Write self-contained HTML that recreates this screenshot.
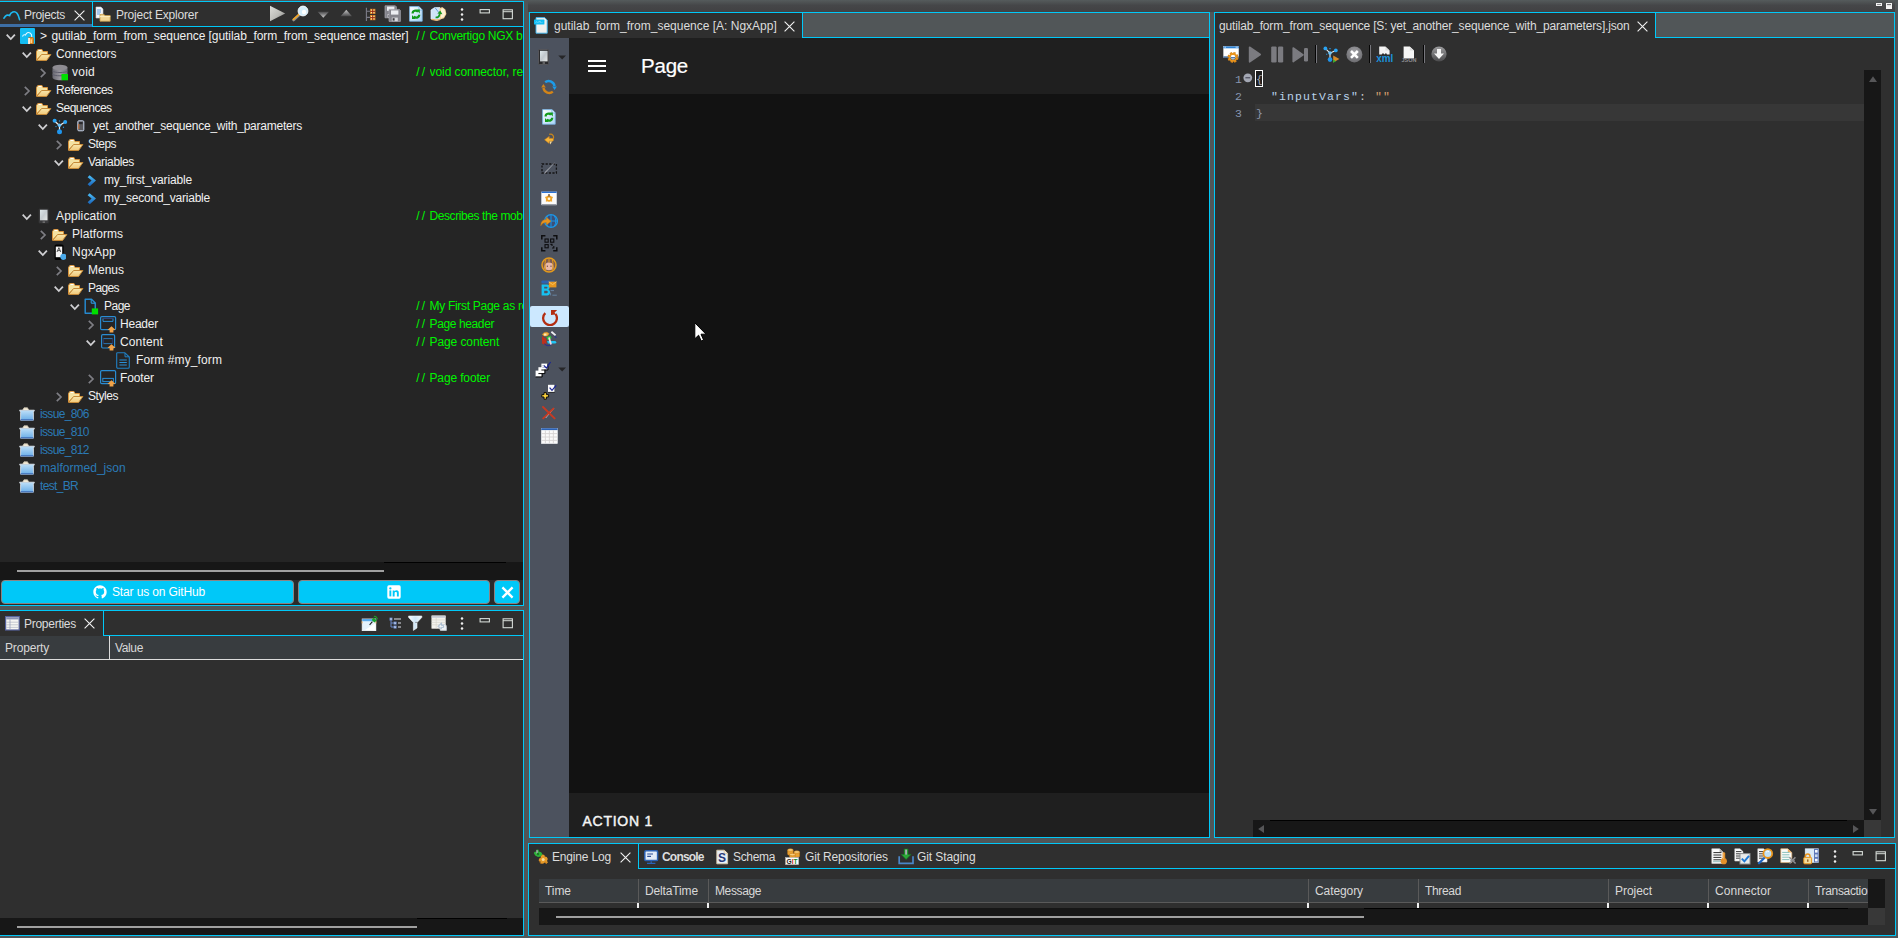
<!DOCTYPE html>
<html><head><meta charset="utf-8"><title>Convertigo Studio</title>
<style>
html,body{margin:0;padding:0;background:#515658}
body{width:1898px;height:938px;overflow:hidden;position:relative;background:#515658;font-family:"Liberation Sans",sans-serif;font-size:12px}
body>div,body>svg{position:absolute;display:block}
.t{white-space:pre}
</style></head><body>
<svg width="0" height="0" style="left:0;top:0"><defs><linearGradient id="plg" x1="0" y1="0" x2="1" y2="1"><stop offset="0" stop-color="#dededa"/><stop offset=".55" stop-color="#bcbcb8"/><stop offset="1" stop-color="#7c7c7c"/></linearGradient><linearGradient id="adg" x1="0" y1="0" x2="0" y2="1"><stop offset="0" stop-color="#4a4a4c"/><stop offset="1" stop-color="#cfcfcf"/></linearGradient><linearGradient id="aug" x1="0" y1="0" x2="0" y2="1"><stop offset="0" stop-color="#c8c8c8"/><stop offset="1" stop-color="#4a4a4c"/></linearGradient><linearGradient id="drg1" x1="0" y1="0" x2="1" y2="1"><stop offset="0" stop-color="#ffffff"/><stop offset="1" stop-color="#a9d4f6"/></linearGradient><linearGradient id="fg" x1="0" y1="0" x2="0" y2="1"><stop offset="0" stop-color="#f7e7ae"/><stop offset="1" stop-color="#f2c878"/></linearGradient><linearGradient id="dbg" x1="0" y1="0" x2="1" y2="0"><stop offset="0" stop-color="#6a6a72"/><stop offset=".5" stop-color="#9a98a0"/><stop offset="1" stop-color="#6e6e76"/></linearGradient><linearGradient id="vg" x1="0" y1="0" x2="0" y2="1"><stop offset="0" stop-color="#4cc0fa"/><stop offset="1" stop-color="#1760b6"/></linearGradient><linearGradient id="phg" x1="0" y1="0" x2="1" y2="1"><stop offset="0" stop-color="#dfe8ea"/><stop offset=".5" stop-color="#c6ccd0"/><stop offset="1" stop-color="#e6e8e6"/></linearGradient><linearGradient id="cpg" x1="0" y1="0" x2="0" y2="1"><stop offset="0" stop-color="#bfe0f8"/><stop offset="1" stop-color="#6aaee8"/></linearGradient><linearGradient id="flg" x1="0" y1="0" x2="1" y2="0"><stop offset="0" stop-color="#f6fbfe"/><stop offset=".5" stop-color="#cfe6f6"/><stop offset="1" stop-color="#f2f8fc"/></linearGradient><linearGradient id="ph2" x1="0" y1="0" x2="1" y2="1"><stop offset="0" stop-color="#e2ecee"/><stop offset=".5" stop-color="#c2c8cc"/><stop offset="1" stop-color="#e8eae8"/></linearGradient><linearGradient id="drg2" x1="0" y1="0" x2="1" y2="1"><stop offset="0" stop-color="#ffffff"/><stop offset="1" stop-color="#a9d4f6"/></linearGradient><radialGradient id="gsg" cx=".5" cy=".35" r=".7"><stop offset="0" stop-color="#a2a2a6"/><stop offset="1" stop-color="#68686c"/></radialGradient><linearGradient id="gdg" x1="0" y1="0" x2="0" y2="1"><stop offset="0" stop-color="#9c9c9e"/><stop offset="1" stop-color="#4a4a4c"/></linearGradient></defs></svg>
<div style="left:528px;top:0px;width:1367px;height:12px;background:linear-gradient(#555b5c,#454648 45%,#414143);"></div>
<svg style="left:1876px;top:3px" width="7" height="4" viewBox="0 0 7 4"><rect x="0" y="0" width="6" height="3" fill="#f2f2f2"/><rect x="1" y="1" width="4" height="1" fill="#8c8c8e"/></svg>
<svg style="left:1886px;top:3px" width="7" height="7" viewBox="0 0 7 7"><rect x="0" y="0" width="6" height="6" fill="#f4f4f4"/><rect x="1" y="1" width="4" height="1" fill="#77777a"/><rect x="1" y="2.6" width="4" height=".5" fill="#c8c8c8"/></svg>
<div style="left:0px;top:1px;width:524px;height:605px;background:#00c8f8;"></div>
<div style="left:0px;top:2px;width:523px;height:25px;background:#2f2f2f;"></div>
<div style="left:0px;top:24px;width:92px;height:3px;background:#3d6ea5;"></div>
<div style="left:92px;top:2px;width:1px;height:25px;background:#00c8f8;"></div>
<div style="left:92px;top:26px;width:431px;height:1px;background:#00c8f8;"></div>
<div style="left:0px;top:27px;width:523px;height:535px;background:#252525;"></div>
<div style="left:0px;top:562px;width:523px;height:18px;background:#171717;"></div>
<div style="left:17px;top:570px;width:367px;height:2px;background:#a0a0a0;"></div>
<div style="left:0px;top:580px;width:523px;height:25px;background:#2b2b2b;"></div>
<svg style="left:3px;top:8px" width="18" height="14" viewBox="0 0 18 14"><path d="M1 10.2C2.6 7.2 4.6 6.4 6.6 7.6C7.8 4 11.5 2.4 14 5.2C15.4 6.8 16 9 16.6 11.6" fill="none" stroke="#1cb9f2" stroke-width="1.7" stroke-linecap="round"/></svg>
<div class="t" style="left:24px;top:6px;line-height:18px;height:18px;color:#dcdcdc;font-size:12px;letter-spacing:-0.295px;">Projects</div>
<svg style="left:74px;top:10px" width="11" height="11" viewBox="0 0 11 11"><path d="M0.6 0.6L10.4 10.4M10.4 0.6L0.6 10.4" stroke="#f2f2f2" stroke-width="1.1" fill="none"/></svg>
<svg style="left:95px;top:5px" width="16" height="17" viewBox="0 0 16 17"><path d="M1 2H6L8 4V13H1Z" fill="#f4f6fa" stroke="#c8ccd4" stroke-width=".6"/>
<path d="M2 5H6M2 7H6M2 9H5" stroke="#5a9ae0" stroke-width="1"/>
<path d="M5 9.4H9L10 10.6H15.2V16.2H5Z" fill="#f2d694" stroke="#c89a48" stroke-width=".8"/><path d="M5 11.6H15.2" stroke="#fbeec2" stroke-width="1"/></svg>
<div class="t" style="left:116px;top:6px;line-height:18px;height:18px;color:#dcdcdc;font-size:12px;letter-spacing:-0.211px;">Project Explorer</div>
<svg style="left:269px;top:5px" width="17" height="17" viewBox="0 0 17 17"><path d="M1 0.8L16.2 8.5L1 16.2Z" fill="url(#plg)"/></svg>
<svg style="left:292px;top:5px" width="17" height="17" viewBox="0 0 17 17"><path d="M8.2 9L1.6 15" stroke="#8a8c90" stroke-width="2.6" stroke-linecap="round"/><path d="M7.6 8.8L1.4 14.4" stroke="#f2a624" stroke-width="1.7" stroke-linecap="round"/>
<circle cx="11" cy="6" r="4.9" fill="#d4ecfa" stroke="#f2f8fc" stroke-width="1"/><circle cx="12" cy="7" r="2.2" fill="#ffffff"/></svg>
<svg style="left:317px;top:11px" width="13" height="8" viewBox="0 0 13 8"><path d="M0.6 0.8H12L6.3 6.8Z" fill="url(#adg)"/></svg>
<svg style="left:340px;top:9px" width="13" height="8" viewBox="0 0 13 8"><path d="M0.6 7.2H12L6.3 0.8Z" fill="url(#aug)"/></svg>
<svg style="left:364px;top:7px" width="12" height="15" viewBox="0 0 12 15"><path d="M2.4 0.8V14M2.4 4.2H6M2.4 10.4H6" stroke="#7c7c88" stroke-width="1.1" fill="none"/><rect x="6" y="1.8" width="5.4" height="5.2" fill="#cf7f22"/><path d="M6.9 2.6h1.2v1.2h-1.2zM9.3 2.6h1.2v1.2h-1.2zM6.9 5h1.2v1.2h-1.2zM9.3 5h1.2v1.2h-1.2z" fill="#ffe9a8"/><path d="M8.7 1.8v5.2M6 4.4h5.4" stroke="#8a1818" stroke-width=".7"/><rect x="6" y="8" width="5.4" height="5.2" fill="#cf7f22"/><path d="M6.9 8.8h1.2v1.2h-1.2zM9.3 8.8h1.2v1.2h-1.2zM6.9 11.2h1.2v1.2h-1.2zM9.3 11.2h1.2v1.2h-1.2z" fill="#ffe9a8"/><path d="M8.7 8v5.2M6 10.6h5.4" stroke="#8a1818" stroke-width=".7"/></svg>
<svg style="left:384px;top:5px" width="17" height="17" viewBox="0 0 17 17"><path d="M1 0.8h10.4l1 1v11h-11.4z" fill="#84848c" stroke="#a8a8b0" stroke-width=".7"/><rect x="3" y="1.6" width="7.4" height="4.2" fill="#ecedf2"/><rect x="3.6" y="9" width="6" height="3.6" fill="#d8d8dc"/><rect x="4.4" y="9.8" width="2" height="2.4" fill="#3a3a40"/><path d="M5 4.4h10.4l1 1v11h-11.4z" fill="#84848c" stroke="#a8a8b0" stroke-width=".7"/><rect x="7" y="5.4" width="7.4" height="4.2" fill="#ecedf2"/><rect x="7.8" y="12.6" width="6" height="3.6" fill="#d8d8dc"/><rect x="8.6" y="13.2" width="2" height="2.4" fill="#3a3a40"/></svg>
<svg style="left:409px;top:6px" width="14" height="16" viewBox="0 0 14 16"><path d="M0.6 0.6H10L13.2 3.8V15.2H0.6Z" fill="url(#drg1)" stroke="#7ab8ea" stroke-width=".8"/><path d="M10 0.8V4H13" fill="#e8f4fe" stroke="#5aa4e0" stroke-width=".7"/>
<path d="M3.6 7.4C3.6 4.6 7.2 3.8 9 5.8" fill="none" stroke="#129a1a" stroke-width="2.2"/><path d="M7.2 3.4H10.8V7.4Z" fill="#129a1a"/>
<path d="M10.2 8.8C10.2 11.8 6.6 12.6 4.8 10.6" fill="none" stroke="#129a1a" stroke-width="2.2"/><path d="M6.6 13H3V9Z" fill="#129a1a"/></svg>
<svg style="left:430px;top:6px" width="17" height="15" viewBox="0 0 17 15"><path d="M1 4L4.6 1.6H10L11 4V12.6L7 14.4L1 13Z" fill="#cfe4f6" stroke="#eaf4fc" stroke-width=".7"/>
<path d="M9.4 2.6L12.2 1L15.4 3.4L16.4 8L14 12.2L10 13.6Z" fill="#f6d59a"/><path d="M11 3L12.6 2.2L14.6 4L15.4 8L13.6 11L11 12Z" fill="#fdf1d4"/>
<path d="M4.8 1.4L8.6 6.2" stroke="#6a9cd8" stroke-width="1"/><path d="M1.6 13.4L6 14.2L9.8 13.6" stroke="#f0b060" stroke-width="1.2" fill="none"/>
<path d="M5.6 11.4C8 11.8 9.6 10 9.8 7.4" fill="none" stroke="#14961e" stroke-width="1.7"/><path d="M7.4 7.6L10.2 4.6L12.4 8.2Z" fill="#14961e"/></svg>
<svg style="left:460px;top:8px" width="4" height="13" viewBox="0 0 4 13"><circle cx="2" cy="1.6" r="1.25" fill="#eee"/><circle cx="2" cy="6.5" r="1.25" fill="#eee"/><circle cx="2" cy="11.4" r="1.25" fill="#eee"/></svg>
<svg style="left:479px;top:9px" width="12" height="5" viewBox="0 0 12 5"><rect x="1.1" y="0.6" width="9.3" height="3.3" fill="none" stroke="#d4dad6" stroke-width="1.1"/></svg>
<svg style="left:502px;top:9px" width="12" height="11" viewBox="0 0 12 11"><rect x="1.1" y="0.8" width="9.3" height="8.9" fill="none" stroke="#d4dad6" stroke-width="1.1"/><path d="M1 2.7H10.4" stroke="#d4dad6" stroke-width="1"/></svg>
<svg style="left:6px;top:34px" width="10" height="7" viewBox="0 0 10 7"><path d="M0.7 0.7L4.8 5L8.9 0.7" fill="none" stroke="#cfcfd2" stroke-width="1.8"/></svg>
<svg style="left:20px;top:27px" width="16" height="17" viewBox="0 0 16 17"><rect x="0" y="1" width="15" height="16" rx="1" fill="#14bdf3"/>
<path d="M2.5 9.5Q3.5 7 5.5 8Q7 4.5 10 6Q12 7 11.8 10" fill="none" stroke="#e8f8ff" stroke-width="1.1"/>
<rect x="8.5" y="10.5" width="5" height="6.5" rx="1" fill="#e8922a" stroke="#c06a10" stroke-width=".8"/>
<rect x="8.2" y="11" width="1.6" height="6" fill="#fff"/><rect x="10.6" y="12.4" width="1.2" height="3.6" fill="#ffe0a8"/></svg>
<div class="t" style="left:40px;top:27px;line-height:18px;height:18px;color:#f0f0f0;font-size:12px;">&gt;</div>
<div class="t" style="left:51.5px;top:27px;line-height:18px;height:18px;color:#f0f0f0;font-size:12px;letter-spacing:-0.062px;">gutilab_form_from_sequence [gutilab_form_from_sequence master]</div>
<div class="t" style="left:416.3px;top:27px;line-height:18px;height:18px;color:#00f400;font-size:12px;letter-spacing:2.1px;">//</div>
<div class="t" style="left:429.5px;top:27px;line-height:18px;height:18px;color:#00f400;font-size:12px;width:93.5px;overflow:hidden;letter-spacing:-0.274px;">Convertigo NGX builder</div>
<svg style="left:22px;top:52px" width="10" height="7" viewBox="0 0 10 7"><path d="M0.7 0.7L4.8 5L8.9 0.7" fill="none" stroke="#cfcfd2" stroke-width="1.8"/></svg>
<svg style="left:36px;top:46px" width="16" height="16" viewBox="0 0 16 16"><path d="M0.5 14V5.5L1.8 3.5H6L7 5.5H11.5V9H5.5Z" fill="#f4e2a2" stroke="#d8923c" stroke-width="1"/>
<path d="M2.6 3.9H5.4V5H2.6Z" fill="#ffffff"/>
<path d="M0.6 14.5L5.6 8.5H14.9L10.6 14.5Z" fill="url(#fg)" stroke="#c58a38" stroke-width="1"/></svg>
<div class="t" style="left:56px;top:45px;line-height:18px;height:18px;color:#f0f0f0;font-size:12px;letter-spacing:-0.108px;">Connectors</div>
<svg style="left:40px;top:68px" width="7" height="11" viewBox="0 0 7 11"><path d="M0.8 0.8L5 5L0.8 9.2" fill="none" stroke="#7e7e84" stroke-width="1.7"/></svg>
<svg style="left:52px;top:64px" width="17" height="17" viewBox="0 0 17 17"><path d="M0.5 3.5V13.2C0.5 15 3.8 16.3 8 16.3S15.5 15 15.5 13.2V3.5Z" fill="url(#dbg)"/>
<ellipse cx="8" cy="3.6" rx="7.5" ry="2.8" fill="#8e8c92"/>
<path d="M0.5 7C2 9 14 9 15.5 7M0.5 10.3C2 12.3 14 12.3 15.5 10.3" fill="none" stroke="#5e5e6c" stroke-width="1"/>
<rect x="9.5" y="10" width="6.5" height="6.3" fill="#00e000"/></svg>
<div class="t" style="left:72px;top:63px;line-height:18px;height:18px;color:#f0f0f0;font-size:12px;letter-spacing:0.246px;">void</div>
<div class="t" style="left:416.3px;top:63px;line-height:18px;height:18px;color:#00f400;font-size:12px;letter-spacing:2.1px;">//</div>
<div class="t" style="left:429.5px;top:63px;line-height:18px;height:18px;color:#00f400;font-size:12px;width:93.5px;overflow:hidden;letter-spacing:-0.069px;">void connector, relax</div>
<svg style="left:24px;top:86px" width="7" height="11" viewBox="0 0 7 11"><path d="M0.8 0.8L5 5L0.8 9.2" fill="none" stroke="#7e7e84" stroke-width="1.7"/></svg>
<svg style="left:36px;top:82px" width="16" height="16" viewBox="0 0 16 16"><path d="M0.5 14V5.5L1.8 3.5H6L7 5.5H11.5V9H5.5Z" fill="#f4e2a2" stroke="#d8923c" stroke-width="1"/>
<path d="M2.6 3.9H5.4V5H2.6Z" fill="#ffffff"/>
<path d="M0.6 14.5L5.6 8.5H14.9L10.6 14.5Z" fill="url(#fg)" stroke="#c58a38" stroke-width="1"/></svg>
<div class="t" style="left:56px;top:81px;line-height:18px;height:18px;color:#f0f0f0;font-size:12px;letter-spacing:-0.477px;">References</div>
<svg style="left:22px;top:106px" width="10" height="7" viewBox="0 0 10 7"><path d="M0.7 0.7L4.8 5L8.9 0.7" fill="none" stroke="#cfcfd2" stroke-width="1.8"/></svg>
<svg style="left:36px;top:100px" width="16" height="16" viewBox="0 0 16 16"><path d="M0.5 14V5.5L1.8 3.5H6L7 5.5H11.5V9H5.5Z" fill="#f4e2a2" stroke="#d8923c" stroke-width="1"/>
<path d="M2.6 3.9H5.4V5H2.6Z" fill="#ffffff"/>
<path d="M0.6 14.5L5.6 8.5H14.9L10.6 14.5Z" fill="url(#fg)" stroke="#c58a38" stroke-width="1"/></svg>
<div class="t" style="left:56px;top:99px;line-height:18px;height:18px;color:#f0f0f0;font-size:12px;letter-spacing:-0.494px;">Sequences</div>
<svg style="left:38px;top:124px" width="10" height="7" viewBox="0 0 10 7"><path d="M0.7 0.7L4.8 5L8.9 0.7" fill="none" stroke="#cfcfd2" stroke-width="1.8"/></svg>
<svg style="left:52px;top:118px" width="16" height="17" viewBox="0 0 16 17"><path d="M2.5 3L7.5 7.5L13 4M7.5 7.5V13.5" stroke="#f0f0f0" stroke-width="1.2" fill="none"/>
<circle cx="2.6" cy="2.8" r="2" fill="#2aa4f4"/><circle cx="13.2" cy="4" r="2" fill="#2aa4f4"/><circle cx="7.5" cy="13.8" r="2.5" fill="#1f95ec"/>
<circle cx="7.5" cy="7.3" r="1.8" fill="#6cc4fa"/>
<path d="M3.5 8.5L4.5 8.8M11 9L12 9.5M7.5 2.5V3.5" stroke="#2aa4f4" stroke-width="1.2"/></svg>
<svg style="left:77px;top:120px" width="8" height="12" viewBox="0 0 8 12"><rect x="0.8" y="0.8" width="6" height="10" rx="1" fill="#5a5a5e" stroke="#c8d4ea" stroke-width="1"/>
<rect x="2" y="2" width="3.6" height="2.2" fill="#2a2a2e"/><rect x="1.3" y="4" width="1" height="5" fill="#d07030"/></svg>
<div class="t" style="left:93px;top:117px;line-height:18px;height:18px;color:#f0f0f0;font-size:12px;letter-spacing:-0.236px;">yet_another_sequence_with_parameters</div>
<svg style="left:56px;top:140px" width="7" height="11" viewBox="0 0 7 11"><path d="M0.8 0.8L5 5L0.8 9.2" fill="none" stroke="#7e7e84" stroke-width="1.7"/></svg>
<svg style="left:68px;top:136px" width="16" height="16" viewBox="0 0 16 16"><path d="M0.5 14V5.5L1.8 3.5H6L7 5.5H11.5V9H5.5Z" fill="#f4e2a2" stroke="#d8923c" stroke-width="1"/>
<path d="M2.6 3.9H5.4V5H2.6Z" fill="#ffffff"/>
<path d="M0.6 14.5L5.6 8.5H14.9L10.6 14.5Z" fill="url(#fg)" stroke="#c58a38" stroke-width="1"/></svg>
<div class="t" style="left:88px;top:135px;line-height:18px;height:18px;color:#f0f0f0;font-size:12px;letter-spacing:-0.537px;">Steps</div>
<svg style="left:54px;top:160px" width="10" height="7" viewBox="0 0 10 7"><path d="M0.7 0.7L4.8 5L8.9 0.7" fill="none" stroke="#cfcfd2" stroke-width="1.8"/></svg>
<svg style="left:68px;top:154px" width="16" height="16" viewBox="0 0 16 16"><path d="M0.5 14V5.5L1.8 3.5H6L7 5.5H11.5V9H5.5Z" fill="#f4e2a2" stroke="#d8923c" stroke-width="1"/>
<path d="M2.6 3.9H5.4V5H2.6Z" fill="#ffffff"/>
<path d="M0.6 14.5L5.6 8.5H14.9L10.6 14.5Z" fill="url(#fg)" stroke="#c58a38" stroke-width="1"/></svg>
<div class="t" style="left:88px;top:153px;line-height:18px;height:18px;color:#f0f0f0;font-size:12px;letter-spacing:-0.349px;">Variables</div>
<svg style="left:87px;top:175px" width="10" height="12" viewBox="0 0 10 12"><path d="M2.6 0.3L9 5.6L2.8 11.2L0.6 9.3L4.6 5.6L0.6 2.3Z" fill="url(#vg)"/></svg>
<div class="t" style="left:104px;top:171px;line-height:18px;height:18px;color:#f0f0f0;font-size:12px;letter-spacing:-0.159px;">my_first_variable</div>
<svg style="left:87px;top:193px" width="10" height="12" viewBox="0 0 10 12"><path d="M2.6 0.3L9 5.6L2.8 11.2L0.6 9.3L4.6 5.6L0.6 2.3Z" fill="url(#vg)"/></svg>
<div class="t" style="left:104px;top:189px;line-height:18px;height:18px;color:#f0f0f0;font-size:12px;letter-spacing:-0.226px;">my_second_variable</div>
<svg style="left:22px;top:214px" width="10" height="7" viewBox="0 0 10 7"><path d="M0.7 0.7L4.8 5L8.9 0.7" fill="none" stroke="#cfcfd2" stroke-width="1.8"/></svg>
<svg style="left:38px;top:208px" width="12" height="16" viewBox="0 0 12 16"><rect x="0.5" y="0.5" width="10.5" height="15" rx="1.3" fill="#3a3a3c" stroke="#2a2a2a" stroke-width="1"/>
<rect x="2" y="1.8" width="7.5" height="10.5" fill="url(#phg)"/><rect x="4.6" y="13.6" width="2.4" height="1" fill="#8a8a8a"/></svg>
<div class="t" style="left:56px;top:207px;line-height:18px;height:18px;color:#f0f0f0;font-size:12px;letter-spacing:0.144px;">Application</div>
<div class="t" style="left:416.3px;top:207px;line-height:18px;height:18px;color:#00f400;font-size:12px;letter-spacing:2.1px;">//</div>
<div class="t" style="left:429.5px;top:207px;line-height:18px;height:18px;color:#00f400;font-size:12px;width:93.5px;overflow:hidden;letter-spacing:-0.415px;">Describes the mobile</div>
<svg style="left:40px;top:230px" width="7" height="11" viewBox="0 0 7 11"><path d="M0.8 0.8L5 5L0.8 9.2" fill="none" stroke="#7e7e84" stroke-width="1.7"/></svg>
<svg style="left:52px;top:226px" width="16" height="16" viewBox="0 0 16 16"><path d="M0.5 14V5.5L1.8 3.5H6L7 5.5H11.5V9H5.5Z" fill="#f4e2a2" stroke="#d8923c" stroke-width="1"/>
<path d="M2.6 3.9H5.4V5H2.6Z" fill="#ffffff"/>
<path d="M0.6 14.5L5.6 8.5H14.9L10.6 14.5Z" fill="url(#fg)" stroke="#c58a38" stroke-width="1"/></svg>
<div class="t" style="left:72px;top:225px;line-height:18px;height:18px;color:#f0f0f0;font-size:12px;letter-spacing:0.035px;">Platforms</div>
<svg style="left:38px;top:250px" width="10" height="7" viewBox="0 0 10 7"><path d="M0.7 0.7L4.8 5L8.9 0.7" fill="none" stroke="#cfcfd2" stroke-width="1.8"/></svg>
<svg style="left:52px;top:244px" width="14" height="17" viewBox="0 0 14 17"><rect x="2.6" y="0.4" width="9" height="15.6" rx="1.6" fill="#000"/>
<rect x="3.8" y="2.6" width="6.4" height="10.6" fill="#f4f4f4"/>
<path d="M5 8L6.9 3.6L8.8 8M5.7 6.6H8.1" stroke="#444" stroke-width=".9" fill="none"/>
<circle cx="11.4" cy="12.8" r="3.1" fill="#4aaaea"/></svg>
<div class="t" style="left:72px;top:243px;line-height:18px;height:18px;color:#f0f0f0;font-size:12px;letter-spacing:0.216px;">NgxApp</div>
<svg style="left:56px;top:266px" width="7" height="11" viewBox="0 0 7 11"><path d="M0.8 0.8L5 5L0.8 9.2" fill="none" stroke="#7e7e84" stroke-width="1.7"/></svg>
<svg style="left:68px;top:262px" width="16" height="16" viewBox="0 0 16 16"><path d="M0.5 14V5.5L1.8 3.5H6L7 5.5H11.5V9H5.5Z" fill="#f4e2a2" stroke="#d8923c" stroke-width="1"/>
<path d="M2.6 3.9H5.4V5H2.6Z" fill="#ffffff"/>
<path d="M0.6 14.5L5.6 8.5H14.9L10.6 14.5Z" fill="url(#fg)" stroke="#c58a38" stroke-width="1"/></svg>
<div class="t" style="left:88px;top:261px;line-height:18px;height:18px;color:#f0f0f0;font-size:12px;">Menus</div>
<svg style="left:54px;top:286px" width="10" height="7" viewBox="0 0 10 7"><path d="M0.7 0.7L4.8 5L8.9 0.7" fill="none" stroke="#cfcfd2" stroke-width="1.8"/></svg>
<svg style="left:68px;top:280px" width="16" height="16" viewBox="0 0 16 16"><path d="M0.5 14V5.5L1.8 3.5H6L7 5.5H11.5V9H5.5Z" fill="#f4e2a2" stroke="#d8923c" stroke-width="1"/>
<path d="M2.6 3.9H5.4V5H2.6Z" fill="#ffffff"/>
<path d="M0.6 14.5L5.6 8.5H14.9L10.6 14.5Z" fill="url(#fg)" stroke="#c58a38" stroke-width="1"/></svg>
<div class="t" style="left:88px;top:279px;line-height:18px;height:18px;color:#f0f0f0;font-size:12px;letter-spacing:-0.606px;">Pages</div>
<svg style="left:70px;top:304px" width="10" height="7" viewBox="0 0 10 7"><path d="M0.7 0.7L4.8 5L8.9 0.7" fill="none" stroke="#cfcfd2" stroke-width="1.8"/></svg>
<svg style="left:84px;top:298px" width="15" height="17" viewBox="0 0 15 17"><path d="M1.2 1.2H7.5L11.3 5V15.3H1.2Z" fill="none" stroke="#2688cc" stroke-width="1.5" stroke-linejoin="round"/>
<path d="M7.2 1.5V5.2H11" fill="none" stroke="#2fa0e8" stroke-width="1"/>
<rect x="7.8" y="10.4" width="6.3" height="6" fill="#00e000"/></svg>
<div class="t" style="left:104px;top:297px;line-height:18px;height:18px;color:#f0f0f0;font-size:12px;letter-spacing:-0.508px;">Page</div>
<div class="t" style="left:416.3px;top:297px;line-height:18px;height:18px;color:#00f400;font-size:12px;letter-spacing:2.1px;">//</div>
<div class="t" style="left:429.5px;top:297px;line-height:18px;height:18px;color:#00f400;font-size:12px;width:93.5px;overflow:hidden;letter-spacing:-0.292px;">My First Page as root</div>
<svg style="left:88px;top:320px" width="7" height="11" viewBox="0 0 7 11"><path d="M0.8 0.8L5 5L0.8 9.2" fill="none" stroke="#7e7e84" stroke-width="1.7"/></svg>
<svg style="left:100px;top:316px" width="17" height="17" viewBox="0 0 17 17"><rect x="0.6" y="0.6" width="15" height="13" rx="1.2" fill="none" stroke="#2a8cd2" stroke-width="1.2"/><path d="M3 2.4V5.4H13V2.4" fill="none" stroke="#2a8cd2" stroke-width="1"/><path d="M3 2.4H13" stroke="#36427a" stroke-width="1"/><path d="M11.5 10.2L15.6 14H13.4V16.5H9.6V14H7.4Z" fill="#f2a348"/></svg>
<div class="t" style="left:120px;top:315px;line-height:18px;height:18px;color:#f0f0f0;font-size:12px;letter-spacing:-0.227px;">Header</div>
<div class="t" style="left:416.3px;top:315px;line-height:18px;height:18px;color:#00f400;font-size:12px;letter-spacing:2.1px;">//</div>
<div class="t" style="left:429.5px;top:315px;line-height:18px;height:18px;color:#00f400;font-size:12px;width:93.5px;overflow:hidden;letter-spacing:-0.376px;">Page header</div>
<svg style="left:86px;top:340px" width="10" height="7" viewBox="0 0 10 7"><path d="M0.7 0.7L4.8 5L8.9 0.7" fill="none" stroke="#cfcfd2" stroke-width="1.8"/></svg>
<svg style="left:100px;top:334px" width="17" height="17" viewBox="0 0 17 17"><rect x="1.6" y="0.6" width="13" height="13.4" rx="1.2" fill="none" stroke="#2a8cd2" stroke-width="1.2"/><path d="M3.4 4.6H12.6M3.4 9.6H12.6" stroke="#2a74b2" stroke-width="1"/><path d="M3.6 5V9.2M12.4 5V9.2" stroke="#2c3468" stroke-width="1"/><path d="M11.5 10.2L15.6 14H13.4V16.5H9.6V14H7.4Z" fill="#f2a348"/></svg>
<div class="t" style="left:120px;top:333px;line-height:18px;height:18px;color:#f0f0f0;font-size:12px;letter-spacing:0.138px;">Content</div>
<div class="t" style="left:416.3px;top:333px;line-height:18px;height:18px;color:#00f400;font-size:12px;letter-spacing:2.1px;">//</div>
<div class="t" style="left:429.5px;top:333px;line-height:18px;height:18px;color:#00f400;font-size:12px;width:93.5px;overflow:hidden;letter-spacing:-0.086px;">Page content</div>
<svg style="left:116px;top:352px" width="15" height="17" viewBox="0 0 15 17"><path d="M1.6 0.7H8.8L13.3 5V15C13.3 15.8 12.8 16.3 12 16.3H1.9C1.1 16.3 0.7 15.8 0.7 15V1.6C0.7 1 1 0.7 1.6 0.7Z" fill="none" stroke="#2080c4" stroke-width="1.1"/>
<path d="M9 1V4.8H13" fill="none" stroke="#2080c4" stroke-width="1"/>
<path d="M3.4 8H10.8M3.4 10.5H10.8M3.4 13H10.8" stroke="#2a90d8" stroke-width="1.1"/></svg>
<div class="t" style="left:136px;top:351px;line-height:18px;height:18px;color:#f0f0f0;font-size:12px;letter-spacing:0.101px;">Form #my_form</div>
<svg style="left:88px;top:374px" width="7" height="11" viewBox="0 0 7 11"><path d="M0.8 0.8L5 5L0.8 9.2" fill="none" stroke="#7e7e84" stroke-width="1.7"/></svg>
<svg style="left:100px;top:370px" width="17" height="17" viewBox="0 0 17 17"><rect x="0.6" y="0.6" width="15" height="13" rx="1.2" fill="none" stroke="#2a8cd2" stroke-width="1.2"/><rect x="2.8" y="8.4" width="10.6" height="3.2" fill="none" stroke="#2a8cd2" stroke-width="1"/><path d="M11.5 10.2L15.6 14H13.4V16.5H9.6V14H7.4Z" fill="#f2a348"/></svg>
<div class="t" style="left:120px;top:369px;line-height:18px;height:18px;color:#f0f0f0;font-size:12px;letter-spacing:-0.115px;">Footer</div>
<div class="t" style="left:416.3px;top:369px;line-height:18px;height:18px;color:#00f400;font-size:12px;letter-spacing:2.1px;">//</div>
<div class="t" style="left:429.5px;top:369px;line-height:18px;height:18px;color:#00f400;font-size:12px;width:93.5px;overflow:hidden;letter-spacing:-0.141px;">Page footer</div>
<svg style="left:56px;top:392px" width="7" height="11" viewBox="0 0 7 11"><path d="M0.8 0.8L5 5L0.8 9.2" fill="none" stroke="#7e7e84" stroke-width="1.7"/></svg>
<svg style="left:68px;top:388px" width="16" height="16" viewBox="0 0 16 16"><path d="M0.5 14V5.5L1.8 3.5H6L7 5.5H11.5V9H5.5Z" fill="#f4e2a2" stroke="#d8923c" stroke-width="1"/>
<path d="M2.6 3.9H5.4V5H2.6Z" fill="#ffffff"/>
<path d="M0.6 14.5L5.6 8.5H14.9L10.6 14.5Z" fill="url(#fg)" stroke="#c58a38" stroke-width="1"/></svg>
<div class="t" style="left:88px;top:387px;line-height:18px;height:18px;color:#f0f0f0;font-size:12px;letter-spacing:-0.448px;">Styles</div>
<svg style="left:19px;top:406px" width="16" height="16" viewBox="0 0 16 16"><path d="M3.8 4L5 1.8H8.5L9.6 4" fill="#f4e8d0" stroke="#c8c0b0" stroke-width=".8"/>
<path d="M0.6 4.2H15.4L14.4 6.2V14.2H1.6V6.2Z" fill="url(#cpg)" stroke="#e8eef4" stroke-width=".8"/>
<rect x="1.6" y="13.2" width="12.8" height="1.2" fill="#3a6cb8"/></svg>
<div class="t" style="left:40px;top:405px;line-height:18px;height:18px;color:#2b7ab6;font-size:12px;letter-spacing:-0.658px;">issue_806</div>
<svg style="left:19px;top:424px" width="16" height="16" viewBox="0 0 16 16"><path d="M3.8 4L5 1.8H8.5L9.6 4" fill="#f4e8d0" stroke="#c8c0b0" stroke-width=".8"/>
<path d="M0.6 4.2H15.4L14.4 6.2V14.2H1.6V6.2Z" fill="url(#cpg)" stroke="#e8eef4" stroke-width=".8"/>
<rect x="1.6" y="13.2" width="12.8" height="1.2" fill="#3a6cb8"/></svg>
<div class="t" style="left:40px;top:423px;line-height:18px;height:18px;color:#2b7ab6;font-size:12px;letter-spacing:-0.658px;">issue_810</div>
<svg style="left:19px;top:442px" width="16" height="16" viewBox="0 0 16 16"><path d="M3.8 4L5 1.8H8.5L9.6 4" fill="#f4e8d0" stroke="#c8c0b0" stroke-width=".8"/>
<path d="M0.6 4.2H15.4L14.4 6.2V14.2H1.6V6.2Z" fill="url(#cpg)" stroke="#e8eef4" stroke-width=".8"/>
<rect x="1.6" y="13.2" width="12.8" height="1.2" fill="#3a6cb8"/></svg>
<div class="t" style="left:40px;top:441px;line-height:18px;height:18px;color:#2b7ab6;font-size:12px;letter-spacing:-0.658px;">issue_812</div>
<svg style="left:19px;top:460px" width="16" height="16" viewBox="0 0 16 16"><path d="M3.8 4L5 1.8H8.5L9.6 4" fill="#f4e8d0" stroke="#c8c0b0" stroke-width=".8"/>
<path d="M0.6 4.2H15.4L14.4 6.2V14.2H1.6V6.2Z" fill="url(#cpg)" stroke="#e8eef4" stroke-width=".8"/>
<rect x="1.6" y="13.2" width="12.8" height="1.2" fill="#3a6cb8"/></svg>
<div class="t" style="left:40px;top:459px;line-height:18px;height:18px;color:#2b7ab6;font-size:12px;letter-spacing:0.023px;">malformed_json</div>
<svg style="left:19px;top:478px" width="16" height="16" viewBox="0 0 16 16"><path d="M3.8 4L5 1.8H8.5L9.6 4" fill="#f4e8d0" stroke="#c8c0b0" stroke-width=".8"/>
<path d="M0.6 4.2H15.4L14.4 6.2V14.2H1.6V6.2Z" fill="url(#cpg)" stroke="#e8eef4" stroke-width=".8"/>
<rect x="1.6" y="13.2" width="12.8" height="1.2" fill="#3a6cb8"/></svg>
<div class="t" style="left:40px;top:477px;line-height:18px;height:18px;color:#2b7ab6;font-size:12px;letter-spacing:-0.670px;">test_BR</div>
<div style="left:1px;top:580px;width:293px;height:24px;background:#00c8f8;border:1px solid #8c8484;border-radius:4px;box-sizing:border-box;"></div>
<div style="left:298px;top:580px;width:192px;height:24px;background:#00c8f8;border:1px solid #8c8484;border-radius:4px;box-sizing:border-box;"></div>
<div style="left:494px;top:580px;width:26px;height:24px;background:#00c8f8;border:1px solid #8c8484;border-radius:4px;box-sizing:border-box;"></div>
<svg style="left:93px;top:585px" width="14" height="14" viewBox="0 0 14 14"><path d="M7 0.3C3.3 0.3 0.3 3.3 0.3 7C0.3 10 2.2 12.5 4.9 13.4C5.2 13.4 5.3 13.2 5.3 13V11.9C3.5 12.3 3.1 11.1 3.1 11.1C2.8 10.3 2.4 10.1 2.4 10.1C1.8 9.7 2.4 9.7 2.4 9.7C3.1 9.8 3.4 10.4 3.4 10.4C4 11.4 5 11.1 5.4 10.9C5.4 10.5 5.6 10.2 5.8 10C4.3 9.8 2.8 9.3 2.8 6.7C2.8 6 3 5.4 3.4 4.9C3.4 4.7 3.1 4 3.5 3.1C3.5 3.1 4.1 2.9 5.3 3.8C6.4 3.5 7.6 3.5 8.7 3.8C9.9 2.9 10.5 3.1 10.5 3.1C10.9 4 10.6 4.7 10.6 4.9C11 5.4 11.2 6 11.2 6.7C11.2 9.3 9.7 9.8 8.2 10C8.4 10.2 8.7 10.6 8.7 11.2V13C8.7 13.2 8.8 13.4 9.1 13.4C11.8 12.5 13.7 10 13.7 7C13.7 3.3 10.7 0.3 7 0.3Z" fill="#ffffff"/></svg>
<div class="t" style="left:112px;top:583px;line-height:18px;height:18px;color:#ffffff;font-size:12px;letter-spacing:-0.141px;">Star us on GitHub</div>
<svg style="left:387px;top:585px" width="14" height="14" viewBox="0 0 14 14"><rect x="0.3" y="0.3" width="13.4" height="13.4" rx="1.6" fill="#ffffff"/><rect x="2.4" y="5.4" width="1.9" height="6" fill="#00c8f8"/><circle cx="3.35" cy="3.4" r="1.15" fill="#00c8f8"/>
<path d="M5.7 5.4H7.5V6.2C8 5.5 8.7 5.2 9.6 5.2C11.2 5.2 11.8 6.2 11.8 7.9V11.4H9.9V8.3C9.9 7.4 9.6 6.9 8.9 6.9C8.1 6.9 7.6 7.4 7.6 8.3V11.4H5.7Z" fill="#00c8f8"/></svg>
<svg style="left:501px;top:586px" width="13" height="13" viewBox="0 0 13 13"><path d="M1.4 1.4L11.6 11.6M11.6 1.4L1.4 11.6" stroke="#ffffff" stroke-width="2.3" fill="none"/></svg>
<div style="left:0px;top:610px;width:524px;height:326px;background:#00c8f8;"></div>
<div style="left:0px;top:611px;width:523px;height:324px;background:#2f2f2f;"></div>
<div style="left:103px;top:611px;width:1px;height:25px;background:#00c8f8;"></div>
<div style="left:103px;top:635px;width:420px;height:1px;background:#00c8f8;"></div>
<svg style="left:5px;top:616px" width="15" height="15" viewBox="0 0 15 15"><rect x="0.6" y="0.6" width="13.6" height="13.4" fill="#f6f6f2" stroke="#55629c" stroke-width="1.2"/><rect x="1.2" y="1.2" width="12.4" height="2.2" fill="#8a92b4"/>
<path d="M1.2 6.2H13.6M1.2 8.8H13.6M1.2 11.4H13.6" stroke="#b8bcc8" stroke-width=".8"/><path d="M5 3.4V13.6" stroke="#9ca2bc" stroke-width=".8"/></svg>
<div class="t" style="left:24px;top:615px;line-height:18px;height:18px;color:#dcdcdc;font-size:12px;letter-spacing:-0.270px;">Properties</div>
<svg style="left:84px;top:618px" width="11" height="11" viewBox="0 0 11 11"><path d="M0.6 0.6L10.4 10.4M10.4 0.6L0.6 10.4" stroke="#f2f2f2" stroke-width="1.1" fill="none"/></svg>
<svg style="left:361px;top:615px" width="18" height="17" viewBox="0 0 18 17"><rect x="1.2" y="4" width="13.6" height="11.6" fill="#e4f2fc" stroke="#f4f8fc" stroke-width=".8"/><path d="M4 15L14.6 8V15.4Z" fill="#ffffff"/><rect x="1.2" y="4" width="13.6" height="2.2" fill="#5aaaea"/>
<path d="M1 6.4V8.4M15 6.4V8.4" stroke="#f0a040" stroke-width=".8"/>
<path d="M12.4 2.4L15.8 5.6L13.4 7.4L10.8 5Z" fill="#18a028"/><path d="M13 1.6C14.4 0.8 16.6 2.8 16.2 4.4" fill="none" stroke="#18a028" stroke-width="1.2"/><path d="M11.4 6.6L8.6 9.8" stroke="#1a1a1a" stroke-width="1.1"/></svg>
<svg style="left:389px;top:617px" width="13" height="13" viewBox="0 0 13 13"><path d="M2 3.4V10H5M2 6H5" fill="none" stroke="#6a88c8" stroke-width="1"/><rect x="0.5" y="0.6" width="3" height="3" fill="#6a88c8"/><path d="M1.2 1.3l1.6 1.6m0 -1.6l-1.6 1.6" stroke="#dfeaf8" stroke-width=".6"/><rect x="4.6" y="4.6" width="3" height="3" fill="#6a88c8"/><path d="M5.3 5.3l1.6 1.6m0 -1.6l-1.6 1.6" stroke="#dfeaf8" stroke-width=".6"/><rect x="4.6" y="8.6" width="3" height="3" fill="#6a88c8"/><path d="M5.3 9.3l1.6 1.6m0 -1.6l-1.6 1.6" stroke="#dfeaf8" stroke-width=".6"/><path d="M5 2H12M9 6H12M9 10H12" stroke="#e0e2ec" stroke-width="1.2"/></svg>
<svg style="left:408px;top:615px" width="15" height="16" viewBox="0 0 15 16"><path d="M0.6 1H13.8V2.4L9 7.6V13L5.4 15.4V7.6L0.6 2.4Z" fill="url(#flg)" stroke="#f2f6fa" stroke-width=".6"/><path d="M7.2 7.4H9" stroke="#7a7a80" stroke-width=".8"/></svg>
<svg style="left:431px;top:615px" width="16" height="16" viewBox="0 0 16 16"><rect x="0.8" y="0.8" width="13.6" height="12.6" fill="#f4f3ee" stroke="#dcdad2" stroke-width=".6"/><rect x="0.8" y="0.8" width="13.6" height="2" fill="#c8ccd6"/>
<path d="M0.8 5H14.4M0.8 7.4H14.4M0.8 9.8H14.4M5.2 2.8V13.4" stroke="#d8d6cc" stroke-width=".7"/>
<path d="M6.6 11.2L10.6 7.4V9.4H13.4C14.6 9.4 15.4 10.4 15.4 11.6V15.4H9.4L8.8 13.6Z" fill="#f0f2f4" stroke="#c4ccd4" stroke-width=".8"/><path d="M7.4 11.2L10.4 8.4V10.4H12.6V12.4H10.4V13.8Z" fill="none" stroke="#98b0c8" stroke-width=".8"/></svg>
<svg style="left:460px;top:617px" width="4" height="13" viewBox="0 0 4 13"><circle cx="2" cy="1.6" r="1.25" fill="#eee"/><circle cx="2" cy="6.5" r="1.25" fill="#eee"/><circle cx="2" cy="11.4" r="1.25" fill="#eee"/></svg>
<svg style="left:479px;top:618px" width="12" height="5" viewBox="0 0 12 5"><rect x="1.1" y="0.6" width="9.3" height="3.3" fill="none" stroke="#d4dad6" stroke-width="1.1"/></svg>
<svg style="left:502px;top:618px" width="12" height="11" viewBox="0 0 12 11"><rect x="1.1" y="0.8" width="9.3" height="8.9" fill="none" stroke="#d4dad6" stroke-width="1.1"/><path d="M1 2.7H10.4" stroke="#d4dad6" stroke-width="1"/></svg>
<div style="left:0px;top:636px;width:523px;height:23px;background:#383c3f;"></div>
<div style="left:0px;top:659px;width:523px;height:1px;background:#dcdcdc;"></div>
<div style="left:109px;top:636px;width:1px;height:24px;background:#dcdcdc;"></div>
<div class="t" style="left:5px;top:639px;line-height:18px;height:18px;color:#d8d8d8;font-size:12px;letter-spacing:-0.170px;">Property</div>
<div class="t" style="left:115px;top:639px;line-height:18px;height:18px;color:#d8d8d8;font-size:12px;letter-spacing:-0.362px;">Value</div>
<div style="left:0px;top:918px;width:523px;height:17px;background:#171717;"></div>
<div style="left:417px;top:918px;width:90px;height:1px;background:#000;"></div>
<div style="left:17px;top:926px;width:400px;height:2px;background:#a0a0a0;"></div>
<div style="left:384px;top:562px;width:122px;height:1px;background:#000;"></div>
<div style="left:529px;top:12px;width:681px;height:826px;background:#00c8f8;"></div>
<div style="left:530px;top:13px;width:679px;height:24px;background:#515658;"></div>
<div style="left:530px;top:13px;width:272px;height:25px;background:#2f2f2f;"></div>
<div style="left:802px;top:13px;width:1px;height:25px;background:#00c8f8;"></div>
<svg style="left:534px;top:17px" width="14" height="17" viewBox="0 0 14 17"><path d="M2 0.6H10.6L13.2 3V16.2H2Z" fill="#f1f0ee" stroke="#3cb4ee" stroke-width=".9"/><rect x="0" y="2.6" width="10.4" height="5" rx=".6" fill="#12bdf4"/>
<path d="M1.6 5.8L2.6 4.6L3.6 5.8M4.8 5.8V4.4H6.4V5.8M7.4 5.6L8.6 5.2" stroke="#8fe0fb" stroke-width=".7" fill="none"/></svg>
<div class="t" style="left:554px;top:17px;line-height:18px;height:18px;color:#dcdcdc;font-size:12px;">gutilab_form_from_sequence [A: NgxApp]</div>
<svg style="left:784px;top:21px" width="11" height="11" viewBox="0 0 11 11"><path d="M0.6 0.6L10.4 10.4M10.4 0.6L0.6 10.4" stroke="#f2f2f2" stroke-width="1.1" fill="none"/></svg>
<div style="left:530px;top:38px;width:39px;height:799px;background:#4c525e;"></div>
<div style="left:569px;top:38px;width:640px;height:56px;background:#1f1f1f;"></div>
<div style="left:569px;top:94px;width:640px;height:699px;background:#121212;"></div>
<div style="left:569px;top:793px;width:640px;height:44px;background:#1f1f1f;"></div>
<div style="left:588px;top:60px;width:18px;height:2px;background:#fff;"></div>
<div style="left:588px;top:65px;width:18px;height:2px;background:#fff;"></div>
<div style="left:588px;top:70px;width:18px;height:2px;background:#fff;"></div>
<div class="t" style="left:641px;top:50px;line-height:32px;height:32px;color:#ffffff;font-size:20.5px;-webkit-text-stroke:0.2px #fff;letter-spacing:-0.223px;">Page</div>
<div class="t" style="left:582.5px;top:810px;line-height:22px;height:22px;color:#f4f4f4;font-size:14px;-webkit-text-stroke:0.45px #f4f4f4;letter-spacing:0.740px;">ACTION 1</div>
<div style="left:530px;top:306px;width:39px;height:21px;background:#cce8ff;border-radius:2px;"></div>
<svg style="left:538px;top:49px" width="12" height="16" viewBox="0 0 12 16"><rect x="0.5" y="0.5" width="10.2" height="15" rx="1" fill="#2a2a2c" stroke="#58585c" stroke-width=".9"/>
<rect x="2" y="1.8" width="7.6" height="10.6" fill="url(#ph2)"/><rect x="4.6" y="13.5" width="2.4" height="1" fill="#9a9a9a"/></svg>
<svg style="left:558px;top:55px" width="9" height="5" viewBox="0 0 9 5"><path d="M0.3 0.4H8L4.15 4.6Z" fill="#262628"/></svg>
<svg style="left:541px;top:79px" width="16" height="16" viewBox="0 0 16 16"><path d="M4.2 3.2C7.4 0.6 12.6 2.4 13.6 7" fill="none" stroke="#1c9cea" stroke-width="2.4"/><path d="M11.2 7.4H15.8L13.6 11Z" fill="#1c9cea"/>
<path d="M11.8 12.6C8.6 15.4 3.4 13.6 2.4 9" fill="none" stroke="#d28418" stroke-width="2.4"/><path d="M4.8 8.6H0.2L2.4 5Z" fill="#d28418"/></svg>
<svg style="left:542px;top:109px" width="14" height="16" viewBox="0 0 14 16"><path d="M0.6 0.6H10L13.2 3.8V15.2H0.6Z" fill="url(#drg2)" stroke="#7ab8ea" stroke-width=".8"/><path d="M10 0.8V4H13" fill="#e8f4fe" stroke="#5aa4e0" stroke-width=".7"/>
<path d="M3.6 7.4C3.6 4.6 7.2 3.8 9 5.8" fill="none" stroke="#129a1a" stroke-width="2.2"/><path d="M7.2 3.4H10.8V7.4Z" fill="#129a1a"/>
<path d="M10.2 8.8C10.2 11.8 6.6 12.6 4.8 10.6" fill="none" stroke="#129a1a" stroke-width="2.2"/><path d="M6.6 13H3V9Z" fill="#129a1a"/></svg>
<svg style="left:544px;top:133px" width="12" height="12" viewBox="0 0 12 12"><path d="M5.2 1.4C8.4 0.2 10.6 3.4 9 6" fill="none" stroke="#c8861c" stroke-width="1.2"/>
<path d="M0.6 6.8L5.2 3.4V5.4H8.4C9.8 5.6 9.8 8 8.4 8.2H5.2V10.4Z" fill="#f6b63a" stroke="#d88a1a" stroke-width=".6"/><path d="M5.6 8.6L6.4 11.4L8 8.6Z" fill="#f6dca0"/></svg>
<svg style="left:541px;top:162px" width="17" height="13" viewBox="0 0 17 13"><rect x="1" y="2" width="14.4" height="9" fill="none" stroke="#141416" stroke-width="1.3" stroke-dasharray="2.2 1.4"/><path d="M13.6 0.8L5 10.4L3.6 11.6L4.2 9.8Z" fill="#a4a6ae" stroke="#8a8c94" stroke-width=".5"/></svg>
<svg style="left:541px;top:191px" width="17" height="15" viewBox="0 0 17 15"><rect x="0.6" y="1" width="15" height="12.6" fill="#fbfbfb" stroke="#d0d4dc" stroke-width=".8"/><rect x="0.6" y="0.6" width="15" height="1.4" fill="#2a72d4"/><rect x="0.6" y="13" width="15" height="1.4" fill="#9a9ea8"/>
<circle cx="8" cy="7.6" r="3.2" fill="#f0a428"/><circle cx="8" cy="7.8" r="1.3" fill="#fff6dc"/><path d="M8 3V5.6" stroke="#4a2a10" stroke-width="1.1"/><path d="M4.4 6L5.6 7M11.6 6L10.4 7M5 10.4L6 9.4M11 10.4L10 9.4" stroke="#f0a428" stroke-width="1.3"/></svg>
<svg style="left:540px;top:213px" width="18" height="16" viewBox="0 0 18 16"><circle cx="11" cy="8" r="6.4" fill="#3b4f78" stroke="#1c96e6" stroke-width="1.3"/><path d="M11 1.6V14.4M4.8 8H17.2M7.6 2.8C5.8 5.8 5.8 10.2 7.6 13.2M14.4 2.8C16.2 5.8 16.2 10.2 14.4 13.2" fill="none" stroke="#1c96e6" stroke-width="1"/>
<path d="M0.8 12.8C0.8 8.6 3 6.6 6.4 6.6V4.2L11 8.2L6.4 12V9.6C4 9.4 2.2 10.4 0.8 12.8Z" fill="#e8941e" stroke="#c87810" stroke-width=".5"/></svg>
<svg style="left:541px;top:235px" width="17" height="17" viewBox="0 0 17 17"><path d="M0.8 4.4V0.8H4.4M12.2 0.8H15.8V4.4M15.8 12.2V15.8H12.2M4.4 15.8H0.8V12.2" fill="none" stroke="#0e0e10" stroke-width="1.5"/>
<rect x="4" y="4" width="3.2" height="3.2" fill="none" stroke="#0e0e10" stroke-width="1.1"/><rect x="9.6" y="4" width="3.2" height="3.2" fill="none" stroke="#0e0e10" stroke-width="1.1"/><rect x="4" y="9.6" width="3.2" height="3.2" fill="none" stroke="#0e0e10" stroke-width="1.1"/>
<path d="M9.4 9.4H11V11M12.8 11V13H11" fill="none" stroke="#0e0e10" stroke-width="1.1"/></svg>
<svg style="left:541px;top:257px" width="16" height="16" viewBox="0 0 16 16"><circle cx="8" cy="8" r="7" fill="#7c5a50" stroke="#e39a1c" stroke-width="1.5"/><path d="M3.4 11.6C3 7 5.6 5.4 8.4 5.6C11.4 5.8 13 8 12.4 11.8C10 13.6 5.6 13.6 3.4 11.6Z" fill="#e8b8a8"/>
<path d="M4.6 2.8C3.8 5.6 3.8 9 4.6 12.8M8 1.4V5.4M11.4 2.8C12.2 5.6 12.2 9 11.4 12.8" fill="none" stroke="#e39a1c" stroke-width="1"/><path d="M5.8 9.2H7M9.4 9.2H10.6" stroke="#5a3a34" stroke-width="1"/></svg>
<svg style="left:541px;top:280px" width="17" height="17" viewBox="0 0 17 17"><rect x="0.4" y="0.6" width="13.2" height="3" rx="1" fill="#2c62b2"/>
<path d="M0.6 4.4H6.4C9.2 4.4 9.4 8.6 7.2 9.6C10 10.6 9.6 15.6 6.4 15.6H0.6ZM3.2 6.8V8.6H5.6C6.8 8.6 6.8 6.8 5.6 6.8ZM3.2 10.8V13.2H5.8C7.2 13.2 7.2 10.8 5.8 10.8Z" fill="#16c2f2" fill-rule="evenodd"/>
<path d="M7.8 1.6H15.4V7.4H7.8Z" fill="#e8961e"/><path d="M7.8 1.8L11.6 4.6L15.4 1.8" fill="none" stroke="#f8c868" stroke-width=".9"/>
<path d="M9.6 10.6H13M9.6 12.6V15.4M11.4 15.2H15.8" stroke="#6a88a8" stroke-width=".9"/></svg>
<svg style="left:541px;top:309px" width="17" height="17" viewBox="0 0 17 17"><path d="M4.3 4.2A6.9 6.9 0 1 0 14.4 4.9" fill="none" stroke="#b32d12" stroke-width="2.3"/><path d="M10 1H16.2L13.6 3.4L14.6 5.6L10 6Z" fill="#b32d12"/></svg>
<svg style="left:541px;top:331px" width="17" height="16" viewBox="0 0 17 16"><path d="M1.4 3.4C3 0.8 6.6 0.6 8 2.8L6.4 5H2.8Z" fill="#f0b040" stroke="#d88a20" stroke-width=".6"/><rect x="3" y="2.6" width="2.4" height="2" fill="#fce8b8"/>
<path d="M1 5V12.4L5.4 15V8Z" fill="#c0301c"/><path d="M3.4 12.6C5.6 15.6 9.4 15 10.4 13" fill="none" stroke="#28388c" stroke-width="1.3"/>
<path d="M5.4 6.2L9.4 4.4L10.6 7L6.8 9.2Z" fill="#28c838"/><path d="M6.2 10H14.4L15.6 11.6L14.4 12.6H6.8Z" fill="#20c4f4"/>
<path d="M8 6.4L10 13.6" stroke="#f4d8e0" stroke-width="1.8"/><path d="M10.4 0.8L14.6 4.4" stroke="#f0f0f4" stroke-width="1.9"/><path d="M13.6 5L15.4 6.8" stroke="#28388c" stroke-width="1.2"/></svg>
<svg style="left:535px;top:361px" width="17" height="17" viewBox="0 0 17 17"><rect x="0.6" y="9.6" width="6" height="6" fill="#ffffff" stroke="#0c0c0c" stroke-width=".0"/><path d="M0.6 16h6.6v-6.2" fill="none" stroke="#0c0c0c" stroke-width="1"/><rect x="3.4" y="6.2" width="6" height="6" fill="#ffffff" stroke="#0c0c0c" stroke-width=".0"/><path d="M3.4 12.6h6.6v-6.2" fill="none" stroke="#0c0c0c" stroke-width="1"/><rect x="6.4" y="2.6" width="6" height="6" fill="#ffffff" stroke="#0c0c0c" stroke-width=".0"/><path d="M6.4 9h6.6v-6.2" fill="none" stroke="#0c0c0c" stroke-width="1"/><path d="M7.4 4.6H10M7.4 6.4H10" stroke="#9098b8" stroke-width=".7"/><path d="M9 4.6L11.4 7L15.6 1" fill="none" stroke="#1a2496" stroke-width="1.2"/></svg>
<svg style="left:558px;top:367px" width="9" height="5" viewBox="0 0 9 5"><path d="M0.3 0.4H8L4.15 4.6Z" fill="#262628"/></svg>
<svg style="left:541px;top:384px" width="16" height="17" viewBox="0 0 16 17"><rect x="7" y="0.8" width="6.4" height="7.2" fill="#fbfbfb"/><path d="M7 8.4H13.8" stroke="#222" stroke-width=".8"/><path d="M8.6 3.6L11 6.4L15.2 1.4" fill="none" stroke="#1a2496" stroke-width="1.2"/>
<path d="M3 8.6H5.4V10.6H7.6V13H5.4V15.2H3V13H0.8V10.6H3Z" fill="#fbd23c" stroke="#0e0e0e" stroke-width="1" stroke-linejoin="round"/></svg>
<svg style="left:542px;top:406px" width="14" height="14" viewBox="0 0 14 14"><path d="M11.8 2.4L3.6 12" stroke="#c0c4cc" stroke-width="1"/><path d="M1 1L12.6 12.4M11.4 2.6L1.2 12.4" stroke="#c63a22" stroke-width="1.9" fill="none" stroke-linecap="round"/></svg>
<svg style="left:541px;top:428px" width="17" height="16" viewBox="0 0 17 16"><rect x="0.4" y="0.4" width="16" height="15.2" fill="#fafafa" stroke="#eef2f6" stroke-width=".6"/><rect x="0.2" y="0.2" width="16.4" height="1.9" fill="#2c62b4"/>
<path d="M0.6 5.6H16.2M0.6 9H16.2M0.6 12.4H16.2M4.4 2.4V15.4M8.4 2.4V15.4M12.4 2.4V15.4" stroke="#d6d2d2" stroke-width=".9"/></svg>
<svg style="left:694px;top:322px" width="13" height="20" viewBox="0 0 13 20"><path d="M0.8 0.8V16.8L4.6 13.2L7.2 19L9.6 18L7 12.2H12Z" fill="#ffffff" stroke="#000000" stroke-width="1" stroke-linejoin="miter"/></svg>
<div style="left:1214px;top:12px;width:681px;height:826px;background:#00c8f8;"></div>
<div style="left:1215px;top:13px;width:679px;height:24px;background:#515658;"></div>
<div style="left:1215px;top:13px;width:440px;height:25px;background:#2f2f2f;"></div>
<div style="left:1655px;top:13px;width:1px;height:25px;background:#00c8f8;"></div>
<div class="t" style="left:1219px;top:17px;line-height:18px;height:18px;color:#dcdcdc;font-size:12px;letter-spacing:-0.169px;">gutilab_form_from_sequence [S: yet_another_sequence_with_parameters].json</div>
<svg style="left:1637px;top:21px" width="11" height="11" viewBox="0 0 11 11"><path d="M0.6 0.6L10.4 10.4M10.4 0.6L0.6 10.4" stroke="#f2f2f2" stroke-width="1.1" fill="none"/></svg>
<div style="left:1215px;top:38px;width:679px;height:799px;background:#2f2f2f;"></div>
<svg style="left:1223px;top:46px" width="17" height="18" viewBox="0 0 17 18"><rect x="0.6" y="0.6" width="15" height="10.6" fill="#ffffff" stroke="#e8ecf2" stroke-width=".5"/><rect x="0.4" y="0.4" width="15.4" height="1.9" fill="#2a82d6"/><path d="M1.4 1.2H3M12.6 1.2H15" stroke="#d6ecff" stroke-width=".8"/><rect x="0.4" y="10.4" width="15.4" height="1.2" fill="#2a5a94"/>
<circle cx="10" cy="11.4" r="4.3" fill="none" stroke="#e08a18" stroke-width="2.4" stroke-dasharray="2.2 1.15"/><circle cx="10" cy="11.4" r="3.4" fill="none" stroke="#e9951d" stroke-width="1.8"/><circle cx="10" cy="11.4" r="2.2" fill="#ffffff"/><path d="M8 11.8H12" stroke="#2a5a94" stroke-width="1.2"/></svg>
<svg style="left:1248px;top:46px" width="14" height="17" viewBox="0 0 14 17"><path d="M1.6 1.2L12.2 8.5L1.6 15.8Z" fill="#7b7b80" stroke="#7b7b80" stroke-width="1.6" stroke-linejoin="round"/></svg>
<svg style="left:1271px;top:46px" width="13" height="17" viewBox="0 0 13 17"><rect x="0.2" y="0.4" width="5.4" height="16" rx="1.2" fill="#7b7b80"/><rect x="7" y="0.4" width="5.2" height="16" rx="1.2" fill="#7b7b80"/></svg>
<svg style="left:1292px;top:46px" width="17" height="17" viewBox="0 0 17 17"><path d="M1.2 2L11 8.8L1.2 15.6Z" fill="#7b7b80" stroke="#7b7b80" stroke-width="1.6" stroke-linejoin="round"/><rect x="12" y="2" width="4" height="13.4" rx="1.2" fill="#7b7b80"/></svg>
<svg style="left:1315px;top:45px" width="3" height="18" viewBox="0 0 3 18"><rect x="0" y="0" width="1" height="18" fill="#050505"/><rect x="1" y="0" width="1" height="18" fill="#77777d"/></svg>
<svg style="left:1323px;top:46px" width="17" height="17" viewBox="0 0 17 17"><path d="M2.6 2.6L7 7.2L12.6 4.6M7 7.2V13" stroke="#e8f0f4" stroke-width="1.1" fill="none"/>
<circle cx="2.4" cy="2.4" r="1.9" fill="#2aa4f4"/><circle cx="12.8" cy="4.4" r="1.9" fill="#2aa4f4"/><circle cx="7" cy="13.6" r="2.3" fill="#1f95ec"/><circle cx="7" cy="7" r="1.8" fill="#6cc4fa"/>
<path d="M3.4 8L4.2 8.4M7 2V3.2" stroke="#2aa4f4" stroke-width="1.1"/><path d="M10.2 9.4L16.4 13L10.2 16.6Z" fill="#d88a28"/><path d="M10.2 13.6V16.8L13 15.2Z" fill="#28b030"/></svg>
<svg style="left:1346px;top:46px" width="17" height="17" viewBox="0 0 17 17"><circle cx="8.4" cy="8.4" r="8" fill="url(#gsg)"/>
<path d="M5 5L11.8 11.8M11.8 5L5 11.8" stroke="#ffffff" stroke-width="2.6" fill="none"/></svg>
<svg style="left:1369px;top:45px" width="3" height="18" viewBox="0 0 3 18"><rect x="0" y="0" width="1" height="18" fill="#050505"/><rect x="1" y="0" width="1" height="18" fill="#77777d"/></svg>
<svg style="left:1376px;top:46px" width="18" height="17" viewBox="0 0 18 17"><path d="M3.2 0.6H9.4L13.6 4.6V8.6H11L10 7L8.4 8.6L7 7L5.6 8.6H3.2Z" fill="#f4f4f4"/><path d="M9.4 0.8V4.6H13.4" fill="#dcdcdc"/>
<text x="0.2" y="15.6" font-family="'Liberation Sans',sans-serif" font-weight="bold" font-size="10.5" fill="#1a92dc" textLength="17" lengthAdjust="spacingAndGlyphs">xml</text></svg>
<svg style="left:1401px;top:46px" width="17" height="17" viewBox="0 0 17 17"><path d="M2.6 0.6H8.8L13 4.6V12.4H2.6Z" fill="#f6f6f6"/><path d="M8.8 0.8V4.6H12.8" fill="#dcdcdc"/>
<text x="0.4" y="15.6" font-family="'Liberation Sans',sans-serif" font-weight="bold" font-size="6" fill="#8e8e92" textLength="15" lengthAdjust="spacingAndGlyphs">JSON</text></svg>
<svg style="left:1423px;top:45px" width="3" height="18" viewBox="0 0 3 18"><rect x="0" y="0" width="1" height="18" fill="#050505"/><rect x="1" y="0" width="1" height="18" fill="#77777d"/></svg>
<svg style="left:1431px;top:46px" width="17" height="17" viewBox="0 0 17 17"><circle cx="8" cy="8" r="7.6" fill="url(#gdg)"/>
<path d="M6 3H10V7.6H13L8 13L3 7.6H6Z" fill="#f4f4f4"/></svg>
<div style="left:1255px;top:104px;width:609px;height:17px;background:#373737;"></div>
<div style="left:1864px;top:70px;width:17px;height:750px;background:#171717;"></div>
<div style="left:1253px;top:820px;width:611px;height:17px;background:#171717;"></div>
<div style="left:1864px;top:820px;width:17px;height:17px;background:#383838;"></div>
<svg style="left:1869px;top:76px" width="8" height="6" viewBox="0 0 8 6"><path d="M0 6H8L4 0.2Z" fill="#565658"/></svg>
<svg style="left:1869px;top:809px" width="8" height="6" viewBox="0 0 8 6"><path d="M0 0H8L4 5.8Z" fill="#565658"/></svg>
<svg style="left:1258px;top:825px" width="6" height="8" viewBox="0 0 6 8"><path d="M6 0V8L0.2 4Z" fill="#565658"/></svg>
<svg style="left:1853px;top:825px" width="6" height="8" viewBox="0 0 6 8"><path d="M0 0V8L5.8 4Z" fill="#565658"/></svg>
<div style="left:1270px;top:820px;width:577px;height:1px;background:#000;"></div>
<div class="t" style="left:1235px;top:71px;line-height:17px;height:17px;color:#8796b0;font-size:11.5px;font-family:'Liberation Mono',monospace;letter-spacing:1.1px;">1</div>
<div class="t" style="left:1235px;top:88px;line-height:17px;height:17px;color:#8796b0;font-size:11.5px;font-family:'Liberation Mono',monospace;letter-spacing:1.1px;">2</div>
<div class="t" style="left:1235px;top:105px;line-height:17px;height:17px;color:#8796b0;font-size:11.5px;font-family:'Liberation Mono',monospace;letter-spacing:1.1px;">3</div>
<svg style="left:1243px;top:73px" width="10" height="10" viewBox="0 0 10 10"><circle cx="4.8" cy="4.8" r="4.4" fill="#a4a8b4"/><path d="M2.4 4.8H7.2" stroke="#3a3a4a" stroke-width="1"/></svg>
<div style="left:1255px;top:70px;width:8px;height:17px;background:#1e1e1e;border:1px solid #ffffff;box-sizing:border-box;"></div>
<div class="t" style="left:1256px;top:71px;line-height:17px;height:17px;color:#a6a6b4;font-size:11.5px;font-family:'Liberation Mono',monospace;letter-spacing:1.1px;">{</div>
<div class="t" style="left:1271px;top:88px;line-height:17px;height:17px;color:#b9d2ea;font-size:11.5px;font-family:'Liberation Mono',monospace;letter-spacing:1.1px;">"inputVars"</div>
<div class="t" style="left:1359px;top:88px;line-height:17px;height:17px;color:#c8c8c8;font-size:11.5px;font-family:'Liberation Mono',monospace;letter-spacing:1.1px;">:</div>
<div class="t" style="left:1375px;top:88px;line-height:17px;height:17px;color:#d9a070;font-size:11.5px;font-family:'Liberation Mono',monospace;letter-spacing:1.1px;">""</div>
<div class="t" style="left:1256px;top:105px;line-height:17px;height:17px;color:#8f98ac;font-size:11.5px;font-family:'Liberation Mono',monospace;letter-spacing:1.1px;">}</div>
<div style="left:528px;top:843px;width:1368px;height:93px;background:#00c8f8;"></div>
<div style="left:529px;top:844px;width:1366px;height:91px;background:#2f2f2f;"></div>
<div style="left:638px;top:844px;width:1px;height:25px;background:#00c8f8;"></div>
<div style="left:638px;top:868px;width:1257px;height:1px;background:#00c8f8;"></div>
<svg style="left:533px;top:849px" width="16" height="16" viewBox="0 0 16 16"><path d="M3.6 0.6L5.6 0.8L5.8 2.6L8.2 3.2L9.6 5.4L7.8 7.6L5 8L2.2 6.4L0.8 4L1.8 2.8L3.4 2.8Z" fill="#2fb43a"/><path d="M3.4 1L4.8 1.2V4.4L3.2 4.4Z" fill="#a4a8ac"/><circle cx="5" cy="5" r="1.2" fill="#1a7a24"/>
<path d="M9.6 5.6L11.4 6L11.8 7.6L13.8 8L14.8 10L14 12L15 13.6L13.2 14.4L11.8 13.6L10 14.8L8 14.4L7.4 12.6L5.6 11.6L6.2 9.6L7.6 9L8 7Z" fill="#e69a28"/><circle cx="10.2" cy="10.6" r="1.5" fill="#f8dca0"/><path d="M6.4 12.4L8.4 15M12.6 12.6L13.4 15" stroke="#c47a18" stroke-width="1"/></svg>
<div class="t" style="left:552px;top:848px;line-height:18px;height:18px;color:#dcdcdc;font-size:12px;letter-spacing:-0.173px;">Engine Log</div>
<svg style="left:620px;top:852px" width="11" height="11" viewBox="0 0 11 11"><path d="M0.6 0.6L10.4 10.4M10.4 0.6L0.6 10.4" stroke="#f2f2f2" stroke-width="1.1" fill="none"/></svg>
<svg style="left:644px;top:850px" width="15" height="15" viewBox="0 0 15 15"><rect x="0.8" y="0.8" width="12.8" height="9.8" rx="1.2" fill="#e2ecf8" stroke="#2c62b4" stroke-width="1.5"/><path d="M3.2 4H9M3.2 6.4H7" stroke="#2c4c94" stroke-width="1.2"/>
<path d="M7.2 11.2V12.8M3 13.4H11.4" stroke="#2c62b4" stroke-width="1.3"/></svg>
<div class="t" style="left:662px;top:848px;line-height:18px;height:18px;color:#dcdcdc;font-size:12px;font-weight:bold;letter-spacing:-0.806px;">Console</div>
<svg style="left:716px;top:849px" width="13" height="16" viewBox="0 0 13 16"><path d="M0.8 1.2H8.2L11.6 4.4V14.8H0.8Z" fill="#e6eef6" stroke="#d8c8a8" stroke-width=".9"/><path d="M8.2 1.2V4.4H11.6" fill="#fbf3e2" stroke="#d8b888" stroke-width=".7"/>
<text x="2" y="13" font-family="'Liberation Sans',sans-serif" font-weight="bold" font-size="12" fill="#27397a">S</text></svg>
<div class="t" style="left:733px;top:848px;line-height:18px;height:18px;color:#dcdcdc;font-size:12px;letter-spacing:-0.339px;">Schema</div>
<svg style="left:785px;top:848px" width="17" height="18" viewBox="0 0 17 18"><path d="M2.6 2v4.2c0 1.4 5.6 1.4 5.6 0v-4.2z" fill="#e9a030" stroke="#c47a18" stroke-width=".5"/><ellipse cx="5.4" cy="2" rx="2.8" ry="1.2" fill="#f8d080" stroke="#c47a18" stroke-width=".5"/><path d="M9 4v4.2c0 1.4 5.6 1.4 5.6 0v-4.2z" fill="#e9a030" stroke="#c47a18" stroke-width=".5"/><ellipse cx="11.8" cy="4" rx="2.8" ry="1.2" fill="#f8d080" stroke="#c47a18" stroke-width=".5"/><path d="M4.6 6.6v4.2c0 1.4 5.6 1.4 5.6 0v-4.2z" fill="#e9a030" stroke="#c47a18" stroke-width=".5"/><ellipse cx="7.4" cy="6.6" rx="2.8" ry="1.2" fill="#f8d080" stroke="#c47a18" stroke-width=".5"/><rect x="0.6" y="9.6" width="13" height="7" fill="#fbfbfb" stroke="#b8b8b8" stroke-width=".6"/>
<text x="1.6" y="15.6" font-family="'Liberation Sans',sans-serif" font-weight="bold" font-size="6.6" fill="#1a1a1a" textLength="11" lengthAdjust="spacingAndGlyphs"><tspan fill="#1a1a1a">G</tspan><tspan fill="#d02818">I</tspan><tspan fill="#188a20">T</tspan></text></svg>
<div class="t" style="left:805px;top:848px;line-height:18px;height:18px;color:#dcdcdc;font-size:12px;letter-spacing:-0.161px;">Git Repositories</div>
<svg style="left:898px;top:848px" width="17" height="17" viewBox="0 0 17 17"><path d="M1.2 8.2V15.4H15V8.2" fill="none" stroke="#4a86c8" stroke-width="1.7"/><path d="M6.2 1H10V6.4H13L8.1 11.4L3.2 6.4H6.2Z" fill="#2aa836" stroke="#167a20" stroke-width=".6"/><rect x="7.2" y="1.6" width="1.8" height="5" fill="#a8aeb2"/></svg>
<div class="t" style="left:917px;top:848px;line-height:18px;height:18px;color:#dcdcdc;font-size:12px;letter-spacing:-0.080px;">Git Staging</div>
<svg style="left:1711px;top:848px" width="17" height="17" viewBox="0 0 17 17"><path d="M0.8 0.8H8.6L12.4 4.4V15.4H0.8Z" fill="#fbfbfb" stroke="#d4d4d4" stroke-width=".6"/><path d="M8.6 0.8V4.4H12.4" fill="#b0b0b0"/><path d="M2.4 4.6H10.4M2.4 7H10.4M2.4 9.4H10.4M2.4 11.8H10.4" stroke="#2e2e2e" stroke-width="1"/><rect x="2" y="12.6" width="8" height="1.6" fill="#a8c8c8"/><rect x="11.6" y="4.2" width="2.6" height="9" rx="1.2" fill="#e4902a"/><circle cx="12.8" cy="13.2" r="3.1" fill="#e4902a"/><path d="M12 6H13M12 8H13M12 10H13" stroke="#f8d8a0" stroke-width=".7"/></svg>
<svg style="left:1734px;top:848px" width="17" height="17" viewBox="0 0 17 17"><path d="M0.8 0.8H6L9 3.6V13H0.8Z" fill="#fbfbfb" stroke="#d4d4d4" stroke-width=".6"/><path d="M2 3.6H7.4M2 5.8H7.4M2 8H7.4M2 10.2H7.4" stroke="#3a3a3a" stroke-width="1"/><rect x="6" y="5.6" width="10" height="10.4" fill="#e8eaea" stroke="#8a8e90" stroke-width="1"/><path d="M7.8 10.6L10.4 13.4L15 7.8" fill="none" stroke="#1e78d4" stroke-width="1.9"/></svg>
<svg style="left:1757px;top:848px" width="17" height="17" viewBox="0 0 17 17"><path d="M0.8 0.8H6.6L10 3.8V14H0.8Z" fill="#fbfbfb" stroke="#d4d4d4" stroke-width=".6"/><path d="M2 3.6H6.4M2 5.8H6.4M2 8H6.4M2 10.2H6.4" stroke="#3a3a3a" stroke-width="1"/><path d="M8 9.2L2 15.2" stroke="#1e64c0" stroke-width="2.3" stroke-linecap="round"/><circle cx="10.8" cy="5.6" r="4.4" fill="#bfe0f4" stroke="#e8941c" stroke-width="1.8"/><path d="M9 4.2A2.4 2.4 0 0 1 12 3.6" fill="none" stroke="#ffffff" stroke-width="1"/></svg>
<svg style="left:1780px;top:848px" width="17" height="17" viewBox="0 0 17 17"><path d="M0.8 0.8H7.8L11.8 4.6V14.6H0.8Z" fill="#fbfbf8" stroke="#e8b880" stroke-width=".7"/><path d="M7.8 0.8V4.6H11.8Z" fill="#f0b060"/><path d="M2.2 4.4H9.4M2.2 6.8H9.4M2.2 9.2H9.4M2.2 11.6H9.4" stroke="#88c0bc" stroke-width="1"/><path d="M9.4 9.2L15.6 15.6M15.4 9.2L9.6 15.6" stroke="#8e8e92" stroke-width="1.5"/><path d="M10 12.4H15" stroke="#8e8e92" stroke-width=".8"/></svg>
<svg style="left:1803px;top:848px" width="17" height="17" viewBox="0 0 17 17"><rect x="2.2" y="0.8" width="13.4" height="13.6" fill="#d8e8f6" stroke="#eef4fa" stroke-width=".6"/><rect x="11" y="0.8" width="4.6" height="13.6" fill="#5e78b8"/><rect x="12" y="2" width="2.6" height="2.6" fill="#f4f8fc"/><rect x="12" y="6.4" width="2.6" height="2.6" fill="#c8d8ec"/><rect x="12" y="10.8" width="2.6" height="2.6" fill="#f4f8fc"/>
<path d="M2.4 9.6V8.2C2.4 5.2 7 5.2 7 8.2V9.6" fill="none" stroke="#e8941c" stroke-width="1.5"/><rect x="0.8" y="9.4" width="7.8" height="6.4" rx=".8" fill="#f2dc9c" stroke="#e8941c" stroke-width="1"/><rect x="4.2" y="11.4" width="1.2" height="2.4" fill="#8a4a10"/></svg>
<svg style="left:1833px;top:850px" width="4" height="13" viewBox="0 0 4 13"><circle cx="2" cy="1.6" r="1.25" fill="#eee"/><circle cx="2" cy="6.5" r="1.25" fill="#eee"/><circle cx="2" cy="11.4" r="1.25" fill="#eee"/></svg>
<svg style="left:1852px;top:851px" width="12" height="5" viewBox="0 0 12 5"><rect x="1.1" y="0.6" width="9.3" height="3.3" fill="none" stroke="#d4dad6" stroke-width="1.1"/></svg>
<svg style="left:1875px;top:851px" width="12" height="11" viewBox="0 0 12 11"><rect x="1.1" y="0.8" width="9.3" height="8.9" fill="none" stroke="#d4dad6" stroke-width="1.1"/><path d="M1 2.7H10.4" stroke="#d4dad6" stroke-width="1"/></svg>
<div style="left:539px;top:879px;width:1329px;height:23px;background:#383c3f;"></div>
<div style="left:539px;top:902px;width:1329px;height:1px;background:#5a5a5a;"></div>
<div style="left:1868px;top:879px;width:17px;height:29px;background:#171717;"></div>
<div style="left:1868px;top:908px;width:17px;height:17px;background:#383838;"></div>
<div style="left:539px;top:908px;width:1329px;height:17px;background:#171717;"></div>
<div style="left:556px;top:916px;width:808px;height:2px;background:#a0a0a0;"></div>
<div style="left:1364px;top:908px;width:484px;height:1px;background:#000;"></div>
<div class="t" style="left:545px;top:882px;line-height:18px;height:18px;color:#d8d8d8;font-size:12px;letter-spacing:-0.059px;">Time</div>
<div style="left:638px;top:879px;width:1px;height:23px;background:#5a5a5a;"></div>
<div style="left:637px;top:903px;width:2px;height:5px;background:#f0f0f0;"></div>
<div class="t" style="left:645px;top:882px;line-height:18px;height:18px;color:#d8d8d8;font-size:12px;letter-spacing:-0.137px;">DeltaTime</div>
<div style="left:708px;top:879px;width:1px;height:23px;background:#5a5a5a;"></div>
<div style="left:707px;top:903px;width:2px;height:5px;background:#f0f0f0;"></div>
<div class="t" style="left:715px;top:882px;line-height:18px;height:18px;color:#d8d8d8;font-size:12px;letter-spacing:-0.386px;">Message</div>
<div style="left:1308px;top:879px;width:1px;height:23px;background:#5a5a5a;"></div>
<div style="left:1307px;top:903px;width:2px;height:5px;background:#f0f0f0;"></div>
<div class="t" style="left:1315px;top:882px;line-height:18px;height:18px;color:#d8d8d8;font-size:12px;letter-spacing:-0.088px;">Category</div>
<div style="left:1418px;top:879px;width:1px;height:23px;background:#5a5a5a;"></div>
<div style="left:1417px;top:903px;width:2px;height:5px;background:#f0f0f0;"></div>
<div class="t" style="left:1425px;top:882px;line-height:18px;height:18px;color:#d8d8d8;font-size:12px;letter-spacing:-0.339px;">Thread</div>
<div style="left:1608px;top:879px;width:1px;height:23px;background:#5a5a5a;"></div>
<div style="left:1607px;top:903px;width:2px;height:5px;background:#f0f0f0;"></div>
<div class="t" style="left:1615px;top:882px;line-height:18px;height:18px;color:#d8d8d8;font-size:12px;letter-spacing:-0.051px;">Project</div>
<div style="left:1708px;top:879px;width:1px;height:23px;background:#5a5a5a;"></div>
<div style="left:1707px;top:903px;width:2px;height:5px;background:#f0f0f0;"></div>
<div class="t" style="left:1715px;top:882px;line-height:18px;height:18px;color:#d8d8d8;font-size:12px;letter-spacing:0.069px;">Connector</div>
<div style="left:1808px;top:879px;width:1px;height:23px;background:#5a5a5a;"></div>
<div style="left:1807px;top:903px;width:2px;height:5px;background:#f0f0f0;"></div>
<div class="t" style="left:1815px;top:882px;line-height:18px;height:18px;color:#d8d8d8;font-size:12px;width:53px;overflow:hidden;letter-spacing:-0.328px;">Transaction</div>
</body></html>
